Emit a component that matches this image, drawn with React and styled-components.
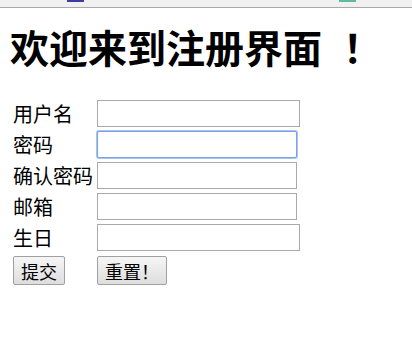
import styled, { createGlobalStyle } from 'styled-components';

const GlobalStyle = createGlobalStyle`
  html, body {
    margin: 0;
    padding: 0;
    background: #ffffff;
    font-family: "Noto Sans CJK SC", "Noto Sans", sans-serif;
  }
`

const Page = styled.div`
  width: 412px;
  height: 361px;
  overflow: hidden;
  background: #ffffff;
`

const TopStrip = styled.div`
  height: 7px;
  background: #f0f0f0;
  border-bottom: 1px solid #a8a8a8;
  display: flex;
  align-items: flex-start;
`

const StripMark = styled.span`
  display: block;
  height: 2px;
  width: ${props => props.w}px;
  margin-left: ${props => props.left}px;
  background: ${props => props.color};
`

const Content = styled.div`
  padding: 0 8px 0 10px;
`

const Title = styled.h1`
  margin: 10px 0 23px 0;
  font-size: 39px;
  font-weight: 700;
  line-height: 56px;
  color: #000000;
  letter-spacing: 0;
`

const Bang = styled.span`
  display: inline-block;
  margin-left: 21px;
`

const FormTable = styled.table`
  border-spacing: 2px;
  border-collapse: separate;
`

const Cell = styled.td`
  padding: 1px;
  vertical-align: middle;
`

const Label = styled.span`
  display: block;
  font-size: 20px;
  line-height: 27px;
  color: #000000;
  white-space: nowrap;
`

const TextInput = styled.input`
  display: block;
  box-sizing: border-box;
  width: ${props => props.w}px;
  height: 27px;
  margin: 0;
  padding: 1px 2px;
  font-size: 16px;
  background: #ffffff;
  border: 1px solid ${props => (props.$focused ? '#78a3e6' : '#a9a9a9')};
  border-radius: ${props => (props.$focused ? '2px' : '0')};
  box-shadow: ${props => (props.$focused ? '0 0 0 1px #a9c4f0' : 'none')};
  outline: none;
`

const Button = styled.button`
  display: block;
  box-sizing: border-box;
  height: 29px;
  margin: 1px 0 0 0;
  padding: 0 7px;
  font-family: "Noto Sans CJK SC", "Noto Sans", sans-serif;
  font-size: 18px;
  line-height: 26px;
  color: #000000;
  background: linear-gradient(#f6f6f6, #dddddd);
  border: 1px solid #a0a0a0;
  border-radius: 2px;
`

const fields = [
  { label: '用户名', type: 'text', w: 203 },
  { label: '密码', type: 'password', w: 200, focused: true },
  { label: '确认密码', type: 'password', w: 200 },
  { label: '邮箱', type: 'email', w: 200 },
  { label: '生日', type: 'text', w: 203 },
];

function App() {
  return (
    <Page>
      <GlobalStyle />
      <TopStrip>
        <StripMark left={67} w={17} color="#3c3c9c" />
        <StripMark left={255} w={17} color="#62b9a2" />
      </TopStrip>
      <Content>
        <Title>欢迎来到注册界面<Bang>！</Bang></Title>
        <FormTable>
          <tbody>
            {fields.map(f => (
              <tr key={f.label}>
                <Cell><Label>{f.label}</Label></Cell>
                <Cell>
                  <TextInput type={f.type} w={f.w} $focused={f.focused} readOnly />
                </Cell>
              </tr>
            ))}
            <tr>
              <Cell><Button type="button">提交</Button></Cell>
              <Cell><Button type="button">重置！</Button></Cell>
            </tr>
          </tbody>
        </FormTable>
      </Content>
    </Page>
  );
}

export default App;
